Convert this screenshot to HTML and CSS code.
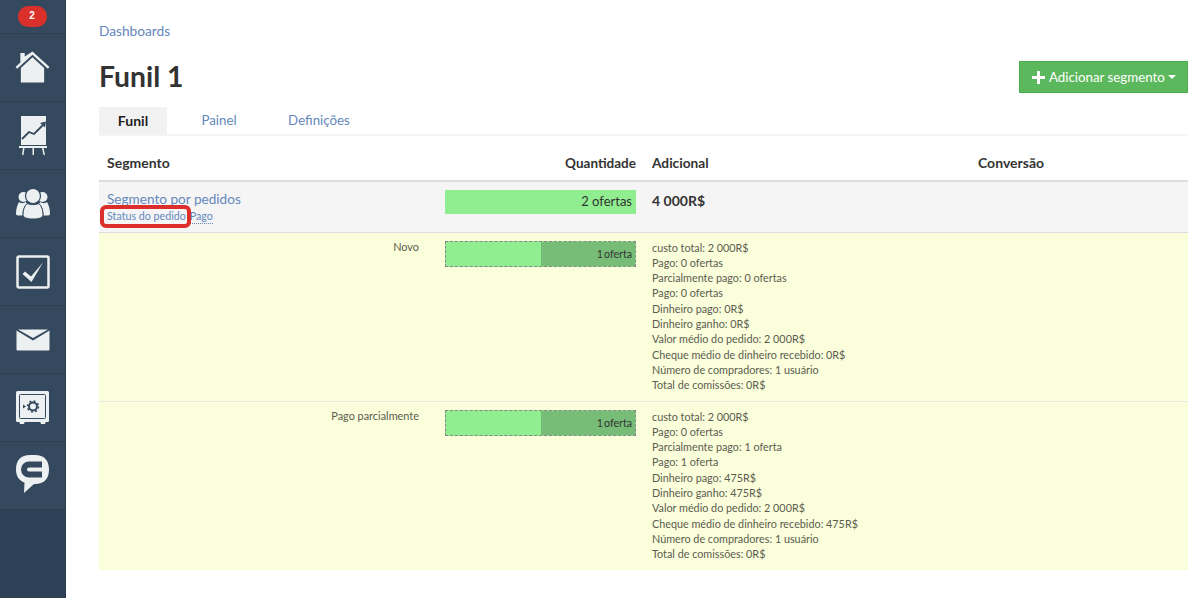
FILE: index.html
```html
<!DOCTYPE html>
<html lang="pt">
<head>
<meta charset="utf-8">
<title>Funil 1</title>
<link rel="stylesheet" href="styles.css">
</head>
<body>
<div class="app">
  <nav class="side">
    <div class="cell cell-badge"><span class="badge">2</span></div>
    <div class="cell">
      <svg width="35" height="33" viewBox="0 0 36 34"><path fill="#ecf0f1" d="M5.500 2h4.500v3.600L18 .5l17.500 16-1.700 1.800L18 3.800 2.200 18.300.5 16.500l5-4.600z"/><path fill="#ecf0f1" d="M18 6.500 6 17.500V32.500h24V17.500z"/></svg>
    </div>
    <div class="cell">
      <svg width="28" height="40" viewBox="0 0 28 40"><path fill="#ecf0f1" d="M2 0h25v29H2z"/><path fill="none" stroke="#34495e" stroke-width="1.800" d="M3 23l7-7 5 2 9-9"/><path fill="#34495e" d="M21 7l6-1.500-1 6z"/><path fill="#ecf0f1" d="M0 30h28v2H0zM4 32h1.500L4.500 39H3zM13.500 32h1.500v7h-1.500zM23 32h1.500l1.500 7h-1.500z"/></svg>
    </div>
    <div class="cell">
      <svg width="34" height="30" viewBox="0 0 34 30"><circle fill="#ecf0f1" cx="7.500" cy="8" r="5"/><circle fill="#ecf0f1" cx="26.500" cy="8" r="5"/><path fill="#ecf0f1" d="M3 13c1.500 1.500 5 1.500 6.500 0l1.500 1.500C8 17 6.500 21 6.500 26.500H2c-1.500 0-2-1-2-2 0-4 1-8 3-11.500zM31 13c-1.500 1.500-5 1.500-6.500 0L23 14.500c3 2.500 4.500 6.500 4.500 12H32c1.500 0 2-1 2-2 0-4-1-8-3-11.500z"/><circle fill="#ecf0f1" stroke="#34495e" stroke-width="1.200" cx="17" cy="7" r="7.500"/><path fill="#ecf0f1" stroke="#34495e" stroke-width="1" d="M11 14.500c3 1.500 9 1.500 12 0 2.500 2.500 4 6.500 4 11 0 3-3.500 4.500-10 4.500S7 28.500 7 25.500c0-4.500 1.500-8.500 4-11z"/></svg>
    </div>
    <div class="cell">
      <svg width="34" height="34" viewBox="0 0 34 34"><rect x="1.500" y="1.500" width="31" height="31" rx="1.500" fill="none" stroke="#ecf0f1" stroke-width="2.500"/><path fill="#ecf0f1" d="M6.500 19 9 16.500l6 5L27 7.500 15.500 27z"/></svg>
    </div>
    <div class="cell">
      <svg width="34" height="22" viewBox="0 0 34 22"><path fill="#ecf0f1" d="M.5 1.500 17 11.500 33.500 1.500v19a1 1 0 0 1-1 1h-31a1 1 0 0 1-1-1zM2 .5h30L17 9z"/></svg>
    </div>
    <div class="cell">
      <svg width="34" height="34" viewBox="0 0 34 34"><rect width="33" height="31" rx="1.500" fill="#ecf0f1"/><path fill="#ecf0f1" d="M3 30h6l-1 3H4zM24 30h6l-1 3h-4z"/><rect x="3.500" y="3.500" width="26" height="24" rx="1" fill="none" stroke="#34495e"/><circle cx="17" cy="15.500" r="4" fill="none" stroke="#34495e" stroke-width="2"/><circle cx="17" cy="15.500" r="5.500" fill="none" stroke="#34495e" stroke-width="1.500" stroke-dasharray="2 2.300"/><path fill="#34495e" d="M7 13.500l3 2-3 2z"/></svg>
    </div>
    <div class="cell cell-c">
      <svg width="33" height="38" viewBox="0 0 33 38"><path fill="#ecf0f1" d="M14 0h5c9 0 14 5 14 14.500S28 29 19 29h-1l-10 9 .5-10.500C3 25.500 0 21 0 14.500 0 5 5 0 14 0z"/><path fill="none" stroke="#34495e" stroke-width="6" d="M26 9.500H13a5 5 0 0 0 0 10h13"/></svg>
    </div>
  </nav>
  <main class="main">
    <a class="crumb" href="#">Dashboards</a>
    <header class="head">
      <h1>Funil 1</h1>
      <button class="add"><svg class="plus" width="13" height="13" viewBox="0 0 13 13"><path fill="#fff" d="M5 0h3v5h5v3H8v5H5V8H0V5h5z"/></svg><span class="add-text">Adicionar segmento</span><span class="caret"></span></button>
    </header>
    <div class="tabs">
      <a class="tab active" href="#">Funil</a>
      <a class="tab" href="#">Painel</a>
      <a class="tab" href="#">Definições</a>
    </div>
    <div class="row row-h">
      <div class="c1">Segmento</div>
      <div class="c2 right">Quantidade</div>
      <div class="c3">Adicional</div>
      <div class="c4">Conversão</div>
    </div>
    <div class="row row-seg">
      <div class="c1">
        <a class="seg-link" href="#">Segmento por pedidos</a>
        <div class="seg-sub"><span class="mark"><a href="#">Status do pedido</a></span><a class="dotted" href="#">Pago</a></div>
      </div>
      <div class="c2"><div class="bar-main">2 ofertas</div></div>
      <div class="c3 total">4 000R$</div>
      <div class="c4"></div>
    </div>
    <div class="row row-sub">
      <div class="c1 right label">Novo</div>
      <div class="c2"><div class="bar-sub"><span class="bar-a"></span><span class="bar-b">1 oferta</span></div></div>
      <div class="c3 stats">custo total: 2 000R$<br>Pago: 0 ofertas<br>Parcialmente pago: 0 ofertas<br>Pago: 0 ofertas<br>Dinheiro pago: 0R$<br>Dinheiro ganho: 0R$<br>Valor médio do pedido: 2 000R$<br>Cheque médio de dinheiro recebido: 0R$<br>Número de compradores: 1 usuário<br>Total de comissões: 0R$</div>
      <div class="c4"></div>
    </div>
    <div class="row row-sub">
      <div class="c1 right label">Pago parcialmente</div>
      <div class="c2"><div class="bar-sub"><span class="bar-a"></span><span class="bar-b">1 oferta</span></div></div>
      <div class="c3 stats">custo total: 2 000R$<br>Pago: 0 ofertas<br>Parcialmente pago: 1 oferta<br>Pago: 1 oferta<br>Dinheiro pago: 475R$<br>Dinheiro ganho: 475R$<br>Valor médio do pedido: 2 000R$<br>Cheque médio de dinheiro recebido: 475R$<br>Número de compradores: 1 usuário<br>Total de comissões: 0R$</div>
      <div class="c4"></div>
    </div>
  </main>
</div>
</body>
</html>
```
FILE: styles.css
```css
* { box-sizing: border-box; }
html, body { margin: 0; height: 100%; }
body { font-family: "Lato", "Liberation Sans", sans-serif; color: #333; background: #fff; overflow: hidden; }
a { color: #6488bd; text-decoration: none; }
.app { display: flex; height: 598px; }
.side { width: 66px; flex: none; background: #2f4156; border-right: 1px solid #2c3e50; }
.cell { height: 68px; display: flex; align-items: center; justify-content: center; background: #34495e; border-bottom: 1px solid #2c3e50; }
.cell-badge { height: 34px; }
.cell-c svg { margin-top: -3px; }
.badge { width: 29px; height: 21px; margin-top: -1px; margin-left: -1px; border-radius: 10px; background: #d9302c; color: #fff; font: bold 10px/20px "Liberation Sans", sans-serif; text-align: center; }
.main { flex: 1; padding: 23px 12px 0 33px; min-width: 0; }
.crumb { display: block; font-size: 13.700px; line-height: 16px; }
.head { display: flex; justify-content: space-between; align-items: center; margin-top: 21px; height: 34px; }
h1 { margin: -2px 0 0; font-size: 28.300px; line-height: 34px; font-weight: 700; color: #333; }
.add { display: flex; align-items: center; width: 169px; height: 32px; border: 1px solid #4cae4c; background: #5cb85c; color: #fff; font: 13.300px "Lato", sans-serif; padding: 0 0 0 12px; white-space: nowrap; }
.plus { flex: none; }
.add-text { margin-left: 4px; }
.caret { display: inline-block; border: 4px solid transparent; border-top-color: #fff; border-bottom: 0; margin-left: 3px; }
.tabs { display: flex; margin-top: 13px; height: 29px; border-bottom: 2px solid #f5f5f5; }
.tab { font-size: 13.300px; line-height: 27px; text-align: center; width: 68px; }
.tab:nth-child(2) { width: 104px; }
.tab:nth-child(3) { width: 96px; }
.tab.active { background: #f2f2f2; color: #222; font-weight: 700; font-size: 14px; }
.row { display: grid; grid-template-columns: 346px 191px 327px 1fr; }
.row > div { min-width: 0; }
.c1 { padding-left: 8px; padding-right: 26px; }
.c3 { padding-left: 16px; }
.c4 { padding-left: 15px; }
.right { text-align: right; }
.row-h { height: 46px; padding-top: 19px; font-size: 14px; line-height: 16px; font-weight: 700; border-bottom: 2px solid #ddd; align-items: start; }
.row-h .c2 { font-size: 13.500px; }
.row-h .c3 { font-size: 13.700px; }
.row-seg { height: 51px; background: #f5f5f5; border-bottom: 1px solid #ddd; padding-top: 8px; }
.seg-link { font-size: 13.600px; line-height: 18px; display: block; }
.seg-sub { font-size: 10.700px; line-height: 14px; margin-top: 1px; display: flex; }
.mark { position: relative; }
.mark::after { content: ""; position: absolute; left: -7px; right: -5px; top: -4px; bottom: -4px; border: 4px solid #dc2f2b; border-radius: 6px; }
.dotted { margin-left: 4px; border-bottom: 1px dotted #6488bd; }
.bar-main { background: #90ee90; height: 24px; text-align: right; padding-right: 4px; font-size: 13px; line-height: 22px; color: #333; }
.total { font-size: 14px; font-weight: 700; line-height: 20px; margin-top: 1px; }
.row-sub { height: 169px; background: #fafedb; border-bottom: 1px solid #e6e6e6; padding-top: 8px; }
.row-sub:last-child { border-bottom: 0; height: 168px; }
.label { font-size: 10.900px; line-height: 14px; color: #5c5c50; margin-top: -1px; }
.bar-sub { display: flex; height: 26px; border: 1px dashed #888; background: #90ee90; }
.bar-a { width: 95px; flex: none; }
.bar-b { flex: 1; background: #77bd77; text-align: right; padding-right: 3px; font-size: 10.600px; word-spacing: -1.500px; line-height: 24px; color: #333; }
.stats { font-size: 10.800px; line-height: 15.330px; color: #5c5c50; margin-top: -1.500px; }
```
